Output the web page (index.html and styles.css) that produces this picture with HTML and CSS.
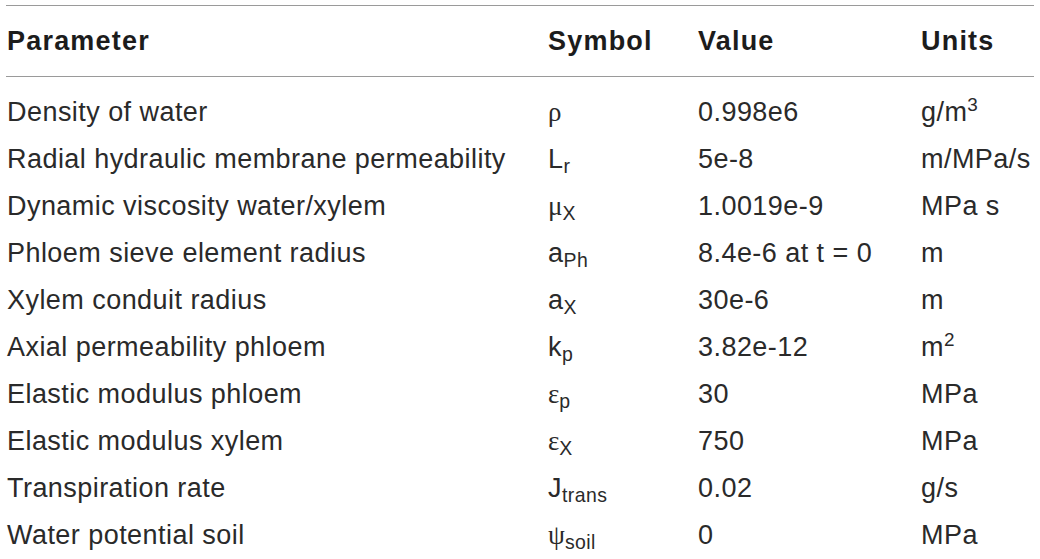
FILE: index.html
```html
<!DOCTYPE html>
<html lang="en">
<head>
<meta charset="utf-8">
<title>Parameters</title>
<link rel="stylesheet" href="styles.css">
</head>
<body>
<div class="wrap">
<table class="params">
  <colgroup>
    <col class="c-param">
    <col class="c-sym">
    <col class="c-val">
    <col class="c-unit">
  </colgroup>
  <thead>
    <tr><th>Parameter</th><th>Symbol</th><th>Value</th><th>Units</th></tr>
  </thead>
  <tbody>
    <tr><td>Density of water</td><td><span class="gr">ρ</span></td><td>0.998e6</td><td>g/m<sup>3</sup></td></tr>
    <tr><td>Radial hydraulic membrane permeability</td><td>L<sub>r</sub></td><td>5e-8</td><td>m/MPa/s</td></tr>
    <tr><td>Dynamic viscosity water/xylem</td><td><span class="gr">μ</span><sub>X</sub></td><td>1.0019e-9</td><td>MPa s</td></tr>
    <tr><td>Phloem sieve element radius</td><td>a<sub>Ph</sub></td><td>8.4e-6 at t = 0</td><td>m</td></tr>
    <tr><td>Xylem conduit radius</td><td>a<sub>X</sub></td><td>30e-6</td><td>m</td></tr>
    <tr><td>Axial permeability phloem</td><td>k<sub>p</sub></td><td>3.82e-12</td><td>m<sup>2</sup></td></tr>
    <tr><td>Elastic modulus phloem</td><td><span class="gr">ε</span><sub>p</sub></td><td>30</td><td>MPa</td></tr>
    <tr><td>Elastic modulus xylem</td><td><span class="gr">ε</span><sub>X</sub></td><td>750</td><td>MPa</td></tr>
    <tr><td>Transpiration rate</td><td>J<sub>trans</sub></td><td>0.02</td><td>g/s</td></tr>
    <tr><td>Water potential soil</td><td><span class="gr">ψ</span><sub>soil</sub></td><td>0</td><td>MPa</td></tr>
  </tbody>
</table>
</div>
</body>
</html>
```
FILE: styles.css
```css
html, body {
  margin: 0;
  padding: 0;
  background: #ffffff;
}
.wrap {
  padding: 5px 6px 0 6px;
}
.params {
  width: 1028px;
  border-collapse: collapse;
  table-layout: fixed;
  font-family: "Liberation Sans", Arial, sans-serif;
  font-size: 27px;
  letter-spacing: 0.45px;
  color: #2a2a2a;
}
.c-param { width: 541px; }
.c-sym { width: 150px; }
.c-val { width: 223px; }
.c-unit { width: 114px; }
.params th {
  text-align: left;
  font-weight: bold;
  letter-spacing: 1.2px;
  color: #1c1c1c;
  height: 70px;
  padding: 0 0 0 1px;
  line-height: 30px;
  vertical-align: middle;
  border-top: 1.5px solid #9a9a9a;
  border-bottom: 1.5px solid #9a9a9a;
}
.params td {
  height: 47px;
  padding: 0 0 0 1px;
  line-height: 30px;
  vertical-align: middle;
  white-space: nowrap;
}
.params tbody tr:first-child td {
  padding-top: 11px;
}
.gr {
  font-family: "Liberation Serif", "Times New Roman", serif;
  font-size: 27px;
  letter-spacing: 0;
}
sub {
  font-size: 0.72em;
  line-height: 0;
  vertical-align: -0.28em;
}
sup {
  font-size: 0.7em;
  line-height: 0;
  vertical-align: 0.55em;
}
```
